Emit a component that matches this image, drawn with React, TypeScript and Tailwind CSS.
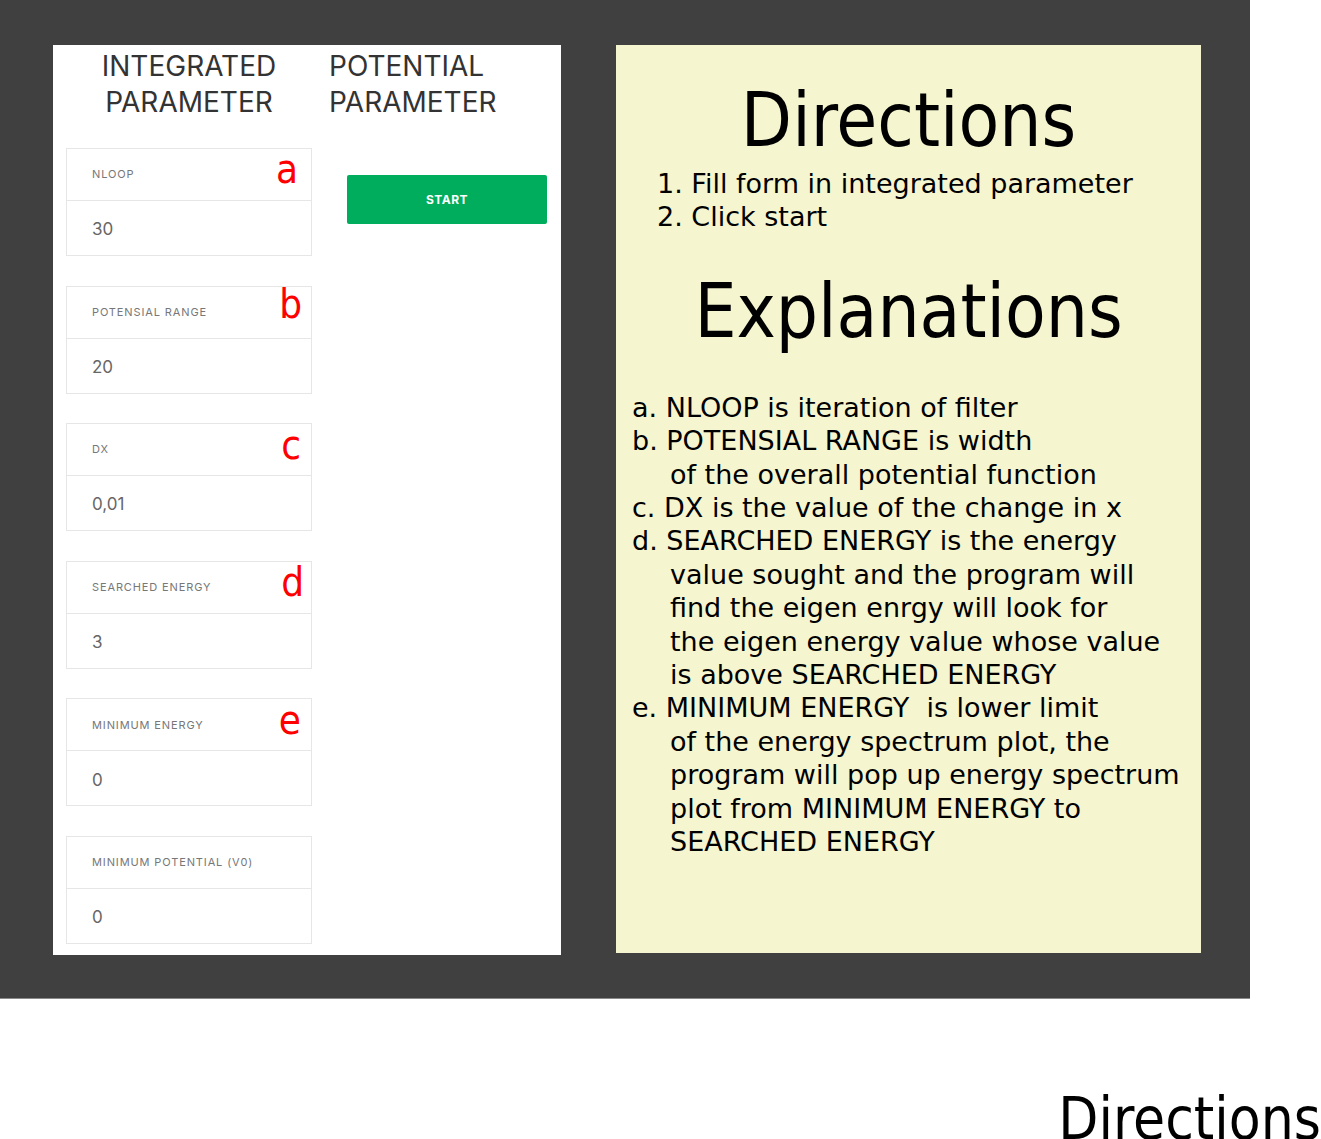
import React from "react";

const fields = [
  { label: "NLOOP", value: "30", mark: "a", markClass: "top-0 right-[13px]" },
  { label: "POTENSIAL RANGE", value: "20", mark: "b", markClass: "-top-[3px] right-[9px]" },
  { label: "DX", value: "0,01", mark: "c", markClass: "top-[1px] right-[10px]" },
  { label: "SEARCHED ENERGY", value: "3", mark: "d", markClass: "top-0 right-[7px]" },
  { label: "MINIMUM ENERGY", value: "0", mark: "e", markClass: "top-[1px] right-[10px]" },
  { label: "MINIMUM POTENTIAL (V0)", value: "0", mark: "", markClass: "" },
];

const explanations: { text: string; indent?: boolean }[] = [
  { text: "a. NLOOP is iteration of filter" },
  { text: "b. POTENSIAL RANGE is width" },
  { text: "of the overall potential function", indent: true },
  { text: "c. DX is the value of the change in x" },
  { text: "d. SEARCHED ENERGY is the energy" },
  { text: "value sought and the program will", indent: true },
  { text: "find the eigen enrgy will look for", indent: true },
  { text: "the eigen energy value whose value", indent: true },
  { text: "is above SEARCHED ENERGY", indent: true },
  { text: "e. MINIMUM ENERGY  is lower limit" },
  { text: "of the energy spectrum plot, the", indent: true },
  { text: "program will pop up energy spectrum", indent: true },
  { text: "plot from MINIMUM ENERGY to", indent: true },
  { text: "SEARCHED ENERGY", indent: true },
];

const uiFont = "font-['Inter','Noto_Sans',sans-serif]";
const headFont = "font-['DejaVu_Sans_Condensed','DejaVu_Sans',sans-serif]";
const bodyFont = "font-['DejaVu_Sans','Verdana',sans-serif]";

function Field({ label, value, mark, markClass }: { label: string; value: string; mark: string; markClass: string }) {
  return (
    <div className="relative w-[246px] border border-[#e6e6e6] bg-white">
      <div className="flex h-[52px] items-center border-b border-[#e6e6e6] pl-[25px] text-[11px] tracking-[0.08em] text-[#777]">
        {label}
      </div>
      <div className="flex h-[54px] items-center pl-[25px] pt-[4px] text-[17px] text-[#666]">{value}</div>
      {mark && (
        <span className={`absolute ${markClass} ${headFont} text-[40px] leading-none text-[#ff0000]`}>
          {mark}
        </span>
      )}
    </div>
  );
}

export default function App() {
  return (
    <div className="w-[1321px] bg-white">
      <div className="flex h-[999px] w-[1250px] items-start gap-[55px] border-b border-[#8a8a8a] bg-[#404040] pl-[53px] pt-[45px]">
        <div className={`flex h-[910px] w-[508px] bg-white pl-[13px] pt-[3px] ${uiFont}`}>
          <div className="flex w-[246px] flex-col">
            <h2 className="text-center text-[28px] leading-[36px] text-[#333]">
              INTEGRATED
              <br />
              PARAMETER
            </h2>
            <div className="mt-[28px] flex flex-col gap-[29.6px]">
              {fields.map((f) => (
                <Field key={f.label} {...f} />
              ))}
            </div>
          </div>
          <div className="ml-[17px] flex flex-col">
            <h2 className="text-[28px] leading-[36px] text-[#333]">
              POTENTIAL
              <br />
              PARAMETER
            </h2>
            <button
              type="button"
              className="ml-[18px] mt-[55px] h-[49px] w-[200px] rounded-[2px] bg-[#00ad5c] text-[12px] font-bold tracking-[0.04em] text-white"
            >
              START
            </button>
          </div>
        </div>

        <div className="h-[908px] w-[585px] bg-[#f5f5d0] pt-[38px] text-black">
          <h1 className={`text-center text-[74px] leading-[74px] ${headFont}`}>Directions</h1>
          <ol className={`mt-[10px] pl-[41px] text-[27px] leading-[33.4px] ${bodyFont}`}>
            <li>1. Fill form in integrated parameter</li>
            <li>2. Click start</li>
          </ol>
          <h1 className={`mt-[40px] text-center text-[74px] leading-[74px] ${headFont}`}>Explanations</h1>
          <div className={`mt-[43px] pl-[16px] text-[27px] leading-[33.4px] ${bodyFont}`}>
            {explanations.map((l, i) => (
              <div key={i} className={`whitespace-pre ${l.indent ? "pl-[38px]" : ""}`}>
                {l.text}
              </div>
            ))}
          </div>
        </div>
      </div>
      <div className={`mt-[91px] text-right text-[58px] leading-[58px] text-black ${headFont}`}>Directions</div>
    </div>
  );
}
